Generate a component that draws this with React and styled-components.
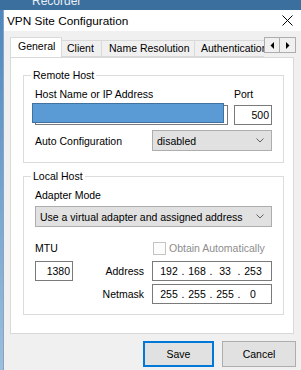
import React from 'react';
import styled, { createGlobalStyle } from 'styled-components';

const Global = createGlobalStyle`
  html, body { margin: 0; padding: 0; background: #f0f0f0; }
  body { width: 301px; height: 370px; overflow: hidden; font-family: "Liberation Sans", Arial, sans-serif; }
  * { box-sizing: border-box; }
`;

const FS = '10.5px';

const Screen = styled.div`
  width: 301px;
  height: 370px;
  overflow: hidden;
  display: flex;
  flex-direction: column;
  background: linear-gradient(180deg, #4c86bd 0%, #7aa9d2 60%, #9bbfdc 100%);
`;

const BehindStrip = styled.div`
  flex: none;
  height: 10px;
  overflow: hidden;
  background: #3b6f9e;
  color: #e8eef5;
  font-size: 12px;
  line-height: 10px;
  padding-left: 32px;
`;

const BehindText = styled.span`
  display: block;
  margin-top: -4px;
`;

const Window = styled.div`
  flex: 1;
  margin-left: 3px;
  display: flex;
  flex-direction: column;
  background: #f0f0f0;
  border-left: 1px solid #8aa4bf;
`;

const TitleBar = styled.div`
  flex: none;
  height: 21px;
  background: #ffffff;
  display: flex;
  align-items: center;
  justify-content: space-between;
  padding: 0 8px 0 3px;
`;

const Title = styled.span`
  font-size: 11.8px;
  color: #000;
`;

const Client = styled.div`
  padding: 6px 0 0 6px;
  display: flex;
  flex-direction: column;
`;

const TabRow = styled.div`
  display: flex;
  height: 20px;
  align-items: flex-end;
  width: 286px;
`;

const TabViewport = styled.div`
  display: flex;
  align-items: flex-end;
  width: 254px;
  height: 20px;
  overflow: hidden;
`;

const Tab = styled.div`
  flex: none;
  width: ${p => p.$w}px;
  height: ${p => (p.$active ? 21 : 17)}px;
  margin-bottom: ${p => (p.$active ? -1 : 0)}px;
  position: relative;
  z-index: ${p => (p.$active ? 1 : 0)};
  background: ${p => (p.$active ? '#ffffff' : '#f0f0f0')};
  border: 1px solid #d9d9d9;
  border-bottom: ${p => (p.$active ? 'none' : '1px solid #d9d9d9')};
  border-left: ${p => (p.$noLeft ? 'none' : '1px solid #d9d9d9')};
  font-size: ${FS};
  line-height: ${p => (p.$active ? 16 : 15)}px;
  padding-left: ${p => p.$pl}px;
  white-space: nowrap;
  color: #000;
`;

const ScrollArrows = styled.div`
  align-self: flex-start;
  display: flex;
  height: 16px;
`;

const ArrowBtn = styled.div`
  width: 16px;
  height: 16px;
  background: #f0f0f0;
  border: 1px solid #adadad;
  border-left: ${p => (p.$first ? '1px solid #adadad' : 'none')};
  display: flex;
  align-items: center;
  justify-content: center;
`;

const Panel = styled.div`
  width: 284px;
  height: 277px;
  background: #ffffff;
  border: 1px solid #d9d9d9;
  padding: 10px 0 0 12px;
`;

const Group = styled.fieldset`
  width: 261px;
  margin: ${p => p.$mt || 0}px 0 0 0;
  padding: 0 11px ${p => p.$pb}px 11px;
  border: 1px solid #dcdcdc;
  min-width: 0;
`;

const Legend = styled.legend`
  font-size: ${FS};
  line-height: 14px;
  padding: 0 2px;
  margin-left: -4px;
  color: #000;
`;

const Row = styled.div`
  display: grid;
  grid-template-columns: ${p => p.$cols};
  column-gap: ${p => p.$gap || 0}px;
  margin-top: ${p => p.$mt || 0}px;
  align-items: center;
`;

const Label = styled.span`
  font-size: ${FS};
  line-height: 14px;
  color: ${p => (p.$disabled ? '#8d8d8d' : '#000')};
  white-space: nowrap;
  text-align: ${p => p.$align || 'left'};
  padding-right: ${p => p.$pr || 0}px;
`;

const TextBox = styled.div`
  position: relative;
  height: 20px;
  border: 1px solid #7a7a7a;
  background: #fff;
  font-size: ${FS};
  line-height: 18px;
  text-align: ${p => p.$align || 'left'};
  padding: 0 2px 0 3px;
  color: #000;
`;

const Redaction = styled.div`
  position: absolute;
  left: -4px;
  top: -3px;
  width: 192px;
  height: 20px;
  background: #5b9bd5;
  border: 1px solid #41719c;
`;

const IpBox = styled.div`
  height: 20px;
  border: 1px solid #7a7a7a;
  background: #fff;
  display: flex;
  padding-left: 5px;
  font-size: ${FS};
  line-height: 18px;
  color: #000;
`;

const IpField = styled.span`
  width: 22px;
  text-align: center;
`;

const IpDot = styled.span`
  width: 6px;
  text-align: center;
`;

const Select = styled.div`
  height: 21px;
  background: #e1e1e1;
  border: 1px solid #adadad;
  display: flex;
  align-items: center;
  justify-content: space-between;
  padding: 0 7px 0 4px;
  font-size: ${FS};
  color: #000;
  white-space: nowrap;
`;

const LocalGrid = styled.div`
  display: grid;
  grid-template-columns: 38px 79px 120px;
  grid-template-rows: 17px 20px 20px;
  row-gap: 3px;
  margin-top: 14px;
`;

const CheckWrap = styled.div`
  display: flex;
  align-items: center;
  gap: 3px;
  height: 14px;
  padding-left: 1px;
`;

const CheckBox = styled.span`
  width: 13px;
  height: 13px;
  border: 1px solid #c4c4c4;
  background: #fcfcfc;
`;

const CenterLabel = styled(Label)`
  line-height: 20px;
`;

const ButtonRow = styled.div`
  width: 286px;
  display: flex;
  justify-content: flex-end;
  gap: 8px;
  margin-top: 7px;
`;

const Button = styled.div`
  width: ${p => p.$w}px;
  height: 26px;
  background: #e1e1e1;
  border: ${p => (p.$default ? '2px solid #0078d7' : '1px solid #adadad')};
  display: flex;
  align-items: center;
  justify-content: center;
  font-size: ${FS};
  color: #000;
`;

const Chevron = () => (
  <svg width="8" height="5" viewBox="0 0 8 5">
    <polyline points="0.5,0.5 4,4 7.5,0.5" fill="none" stroke="#606060" strokeWidth="1" />
  </svg>
);

const CloseIcon = () => (
  <svg width="11" height="11" viewBox="0 0 11 11">
    <path d="M0.5 0.5 L10.5 10.5 M10.5 0.5 L0.5 10.5" stroke="#000" strokeWidth="1" fill="none" />
  </svg>
);

const TriLeft = () => (
  <svg width="4" height="7" viewBox="0 0 4 7"><polygon points="4,0 4,7 0.5,3.5" fill="#000" /></svg>
);
const TriRight = () => (
  <svg width="4" height="7" viewBox="0 0 4 7"><polygon points="0,0 0,7 3.5,3.5" fill="#000" /></svg>
);

const Ip = ({ parts }) => (
  <IpBox>
    {parts.map((p, i) => (
      <React.Fragment key={i}>
        <IpField>{p}</IpField>
        {i < 3 && <IpDot>.</IpDot>}
      </React.Fragment>
    ))}
  </IpBox>
);

export default function App() {
  return (
    <>
      <Global />
      <Screen>
        <BehindStrip><BehindText>Recorder</BehindText></BehindStrip>
        <Window>
          <TitleBar>
            <Title>VPN Site Configuration</Title>
            <CloseIcon />
          </TitleBar>
          <Client>
            <TabRow>
              <TabViewport>
                <Tab $active $w={52} $pl={7}>General</Tab>
                <Tab $w={40} $pl={5} $noLeft>Client</Tab>
                <Tab $w={93} $pl={7} $noLeft>Name Resolution</Tab>
                <Tab $w={90} $pl={6} $noLeft>Authentication</Tab>
              </TabViewport>
              <ScrollArrows>
                <ArrowBtn $first><TriLeft /></ArrowBtn>
                <ArrowBtn><TriRight /></ArrowBtn>
              </ScrollArrows>
            </TabRow>
            <Panel>
              <Group $pb={11}>
                <Legend>Remote Host</Legend>
                <Row $cols="1fr 38px" $gap={6} $mt={5}>
                  <Label>Host Name or IP Address</Label>
                  <Label>Port</Label>
                </Row>
                <Row $cols="1fr 38px" $gap={6} $mt={4}>
                  <TextBox><Redaction /></TextBox>
                  <TextBox $align="right">500</TextBox>
                </Row>
                <Row $cols="1fr 120px" $mt={5}>
                  <Label>Auto Configuration</Label>
                  <Select>disabled<Chevron /></Select>
                </Row>
              </Group>
              <Group $mt={6} $pb={10}>
                <Legend>Local Host</Legend>
                <Row $cols="1fr" $mt={5}>
                  <Label>Adapter Mode</Label>
                </Row>
                <Row $cols="1fr" $mt={4}>
                  <Select>Use a virtual adapter and assigned address<Chevron /></Select>
                </Row>
                <LocalGrid>
                  <Label>MTU</Label>
                  <span />
                  <CheckWrap>
                    <CheckBox />
                    <Label $disabled>Obtain Automatically</Label>
                  </CheckWrap>
                  <TextBox $align="right">1380</TextBox>
                  <CenterLabel $align="right" $pr={8}>Address</CenterLabel>
                  <Ip parts={['192', '168', '33', '253']} />
                  <span />
                  <CenterLabel $align="right" $pr={8}>Netmask</CenterLabel>
                  <Ip parts={['255', '255', '255', '0']} />
                </LocalGrid>
              </Group>
            </Panel>
            <ButtonRow>
              <Button $default $w={71}>Save</Button>
              <Button $w={74}>Cancel</Button>
            </ButtonRow>
          </Client>
        </Window>
      </Screen>
    </>
  );
}
